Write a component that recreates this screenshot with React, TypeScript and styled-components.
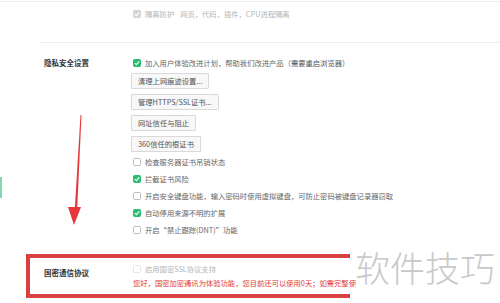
import styled, { createGlobalStyle } from 'styled-components';

const GlobalStyle = createGlobalStyle`
  html, body {
    margin: 0;
    padding: 0;
    background: #fff;
  }
  body {
    font-family: 'Noto Sans CJK SC', 'Noto Sans', sans-serif;
  }
`;

const Page = styled.div`
  position: relative;
  width: 500px;
  height: 303px;
  overflow: hidden;
  background: #fff;
  box-sizing: border-box;
  margin-top: 1px;
  border-top: 1px solid #ececec;
`;

const TopRow = styled.div`
  padding-left: 133px;
  padding-top: 3px;
`;

const Divider = styled.div`
  margin: 20px 0 0 40px;
  height: 1px;
  background: #ededed;
`;

const Section = styled.div`
  display: grid;
  grid-template-columns: 89px 1fr;
  padding: 11px 0 0 44px;
`;

const Label = styled.div<{ $offset?: number }>`
  font-size: 7.5px;
  font-weight: 700;
  color: #333;
  line-height: 17px;
  padding-top: ${({ $offset }) => $offset ?? 0}px;
`;

const Content = styled.div`
  display: flex;
  flex-direction: column;
  align-items: flex-start;
  min-width: 0;
`;

const CheckRow = styled.div<{ $muted?: boolean }>`
  display: flex;
  align-items: center;
  height: 17px;
  gap: 4px;
  font-size: 7.3px;
  white-space: nowrap;
  color: ${({ $muted }) => ($muted ? '#b5b5b5' : '#666')};
`;

const Box = styled.span<{ $state: 'on' | 'off' | 'disabled' | 'faint' }>`
  flex: none;
  width: 8px;
  height: 8px;
  border-radius: 1.5px;
  display: flex;
  align-items: center;
  justify-content: center;
  box-sizing: border-box;
  background: ${({ $state }) =>
    $state === 'on' ? '#2dbb6e' : $state === 'disabled' ? '#d4d4d4' : '#fff'};
  border: 1px solid
    ${({ $state }) =>
      $state === 'on' ? '#2dbb6e' : $state === 'disabled' ? '#d4d4d4' : $state === 'faint' ? '#e6e6e6' : '#bdbdbd'};
`;

const Hint = styled.span`
  color: #46586c;
`;

const Gap = styled.span`
  display: inline-block;
  width: 6px;
`;

const Buttons = styled.div`
  display: flex;
  flex-direction: column;
  align-items: flex-start;
  gap: 5px;
  margin: 2px 0 1px -2px;
`;

const Button = styled.div`
  height: 16px;
  box-sizing: border-box;
  padding: 0 6px;
  display: flex;
  align-items: center;
  font-size: 7.3px;
  color: #555;
  background: #f8f8f8;
  border: 1px solid #d9d9d9;
  border-radius: 1px;
  white-space: nowrap;
`;

const Highlight = styled.div`
  margin: 16px 0 0 26px;
  width: 324px;
  height: 44px;
  box-sizing: border-box;
  border: 4px solid #d94141;
  border-right: none;
  display: grid;
  grid-template-columns: 89px 1fr;
  padding: 2px 0 0 14px;
`;

const Warning = styled.div`
  font-size: 7.3px;
  color: #e23a3a;
  white-space: nowrap;
  line-height: 12px;
`;

const Arrow = styled.svg`
  position: absolute;
  left: 60px;
  top: 105px;
`;

const SideMark = styled.div`
  position: absolute;
  left: 0;
  top: 175px;
  width: 2px;
  height: 21px;
  background: #86d8ae;
`;

const Watermark = styled.div`
  position: absolute;
  left: 355px;
  top: 247px;
  font-size: 35px;
  line-height: 1;
  font-weight: 300;
  color: #c9c9c9;
  white-space: nowrap;
`;

const Check = () => (
  <svg width="6" height="6" viewBox="0 0 6 6">
    <path d="M0.8 3.1 L2.4 4.6 L5.2 1.4" fill="none" stroke="#fff" strokeWidth="1.1" />
  </svg>
);

const options: { text: string; on: boolean }[] = [
  { text: '检查服务器证书吊销状态', on: false },
  { text: '拦截证书风险', on: true },
  { text: '开启安全键盘功能，输入密码时使用虚拟键盘，可防止密码被键盘记录器窃取', on: false },
  { text: '自动停用来源不明的扩展', on: true },
  { text: '开启“禁止跟踪(DNT)”功能', on: false },
];

const buttons = ['清理上网痕迹设置...', '管理HTTPS/SSL证书...', '网址信任与阻止', '360信任的根证书'];

const App = () => {
  return (
    <>
      <GlobalStyle />
      <Page>
        <TopRow>
          <CheckRow $muted>
            <Box $state="disabled">
              <Check />
            </Box>
            <span>
              隔离防护<Gap />网页，代码，插件，CPU进程隔离
            </span>
          </CheckRow>
        </TopRow>
        <Divider />
        <Section>
          <Label>隐私安全设置</Label>
          <Content>
            <CheckRow>
              <Box $state="on">
                <Check />
              </Box>
              <span>
                加入用户体验改进计划，帮助我们改进产品（<Hint>需要重启浏览器</Hint>）
              </span>
            </CheckRow>
            <Buttons>
              {buttons.map((b) => (
                <Button key={b}>{b}</Button>
              ))}
            </Buttons>
            {options.map((o) => (
              <CheckRow key={o.text}>
                <Box $state={o.on ? 'on' : 'off'}>{o.on && <Check />}</Box>
                <span>{o.text}</span>
              </CheckRow>
            ))}
          </Content>
        </Section>
        <Highlight>
          <Label $offset={4}>国密通信协议</Label>
          <Content>
            <CheckRow $muted>
              <Box $state="faint" />
              <span>启用国密SSL协议支持</span>
            </CheckRow>
            <Warning>您好，国密加密通讯为体验功能，您目前还可以使用0天；如需完整使</Warning>
          </Content>
        </Highlight>
        <SideMark />
        <Arrow width="30" height="125" viewBox="0 0 30 125">
          <polygon points="20.5,8 21.5,8 17.2,102 14.8,102" fill="#e5383b" />
          <polygon points="8,100 21,100 14,118" fill="#e5383b" />
        </Arrow>
        <Watermark>软件技巧</Watermark>
      </Page>
    </>
  );
};

export default App;
